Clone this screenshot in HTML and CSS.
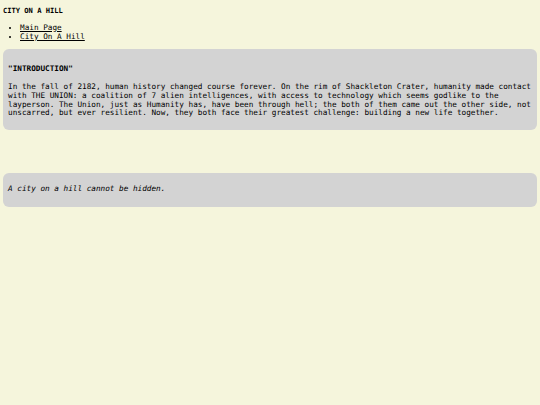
FILE: index.html
```html
<!DOCTYPE html>
<html lang="en">
<head>
<meta charset="utf-8">
<title>City On A Hill</title>
<link rel="stylesheet" href="styles.css">
</head>
<body>
<header class="site-header">
  <h1 class="site-title">CITY ON A HILL</h1>
  <ul class="nav">
    <li><a href="#">Main Page</a></li>
    <li><a href="#">City On A Hill</a></li>
  </ul>
</header>
<main class="content">
  <section class="card intro">
    <h2 class="card-title">"INTRODUCTION"</h2>
    <p class="card-text">In the fall of 2182, human history changed course forever. On the rim of Shackleton Crater, humanity made contact with THE UNION: a coalition of 7 alien intelligences, with access to technology which seems godlike to the layperson. The Union, just as Humanity has, have been through hell; the both of them came out the other side, not unscarred, but ever resilient. Now, they both face their greatest challenge: building a new life together.</p>
  </section>
  <section class="card quote">
    <p class="card-text quote-text">A city on a hill cannot be hidden.</p>
  </section>
</main>
</body>
</html>
```
FILE: styles.css
```css
html {
  background: #f5f5dc;
}
body {
  margin: 0;
  padding: 3px;
  background: #f5f5dc;
  color: #000;
  font-family: "DejaVu Sans Mono", monospace;
  font-size: 7.7px;
  line-height: 8.8px;
}
.site-title {
  margin: 3px 0 0;
  font-size: 7.1px;
  line-height: 9px;
  font-weight: bold;
}
.nav {
  margin: 7.5px 0 0;
  padding-left: 17px;
  line-height: 9px;
}
.nav a {
  color: #000;
  text-decoration: underline;
}
.content {
  margin-top: 8.5px;
}
.card {
  background: #d3d3d3;
  border-radius: 6px;
  padding: 5px;
}
.card-title {
  margin: 10px 0 0;
  font-size: 7.7px;
  line-height: 9px;
  font-weight: bold;
}
.card-text {
  margin: 10px 0 7px;
}
.quote {
  margin-top: 43px;
}
.quote-text {
  margin: 7px 0 8px;
  font-style: italic;
}
```
